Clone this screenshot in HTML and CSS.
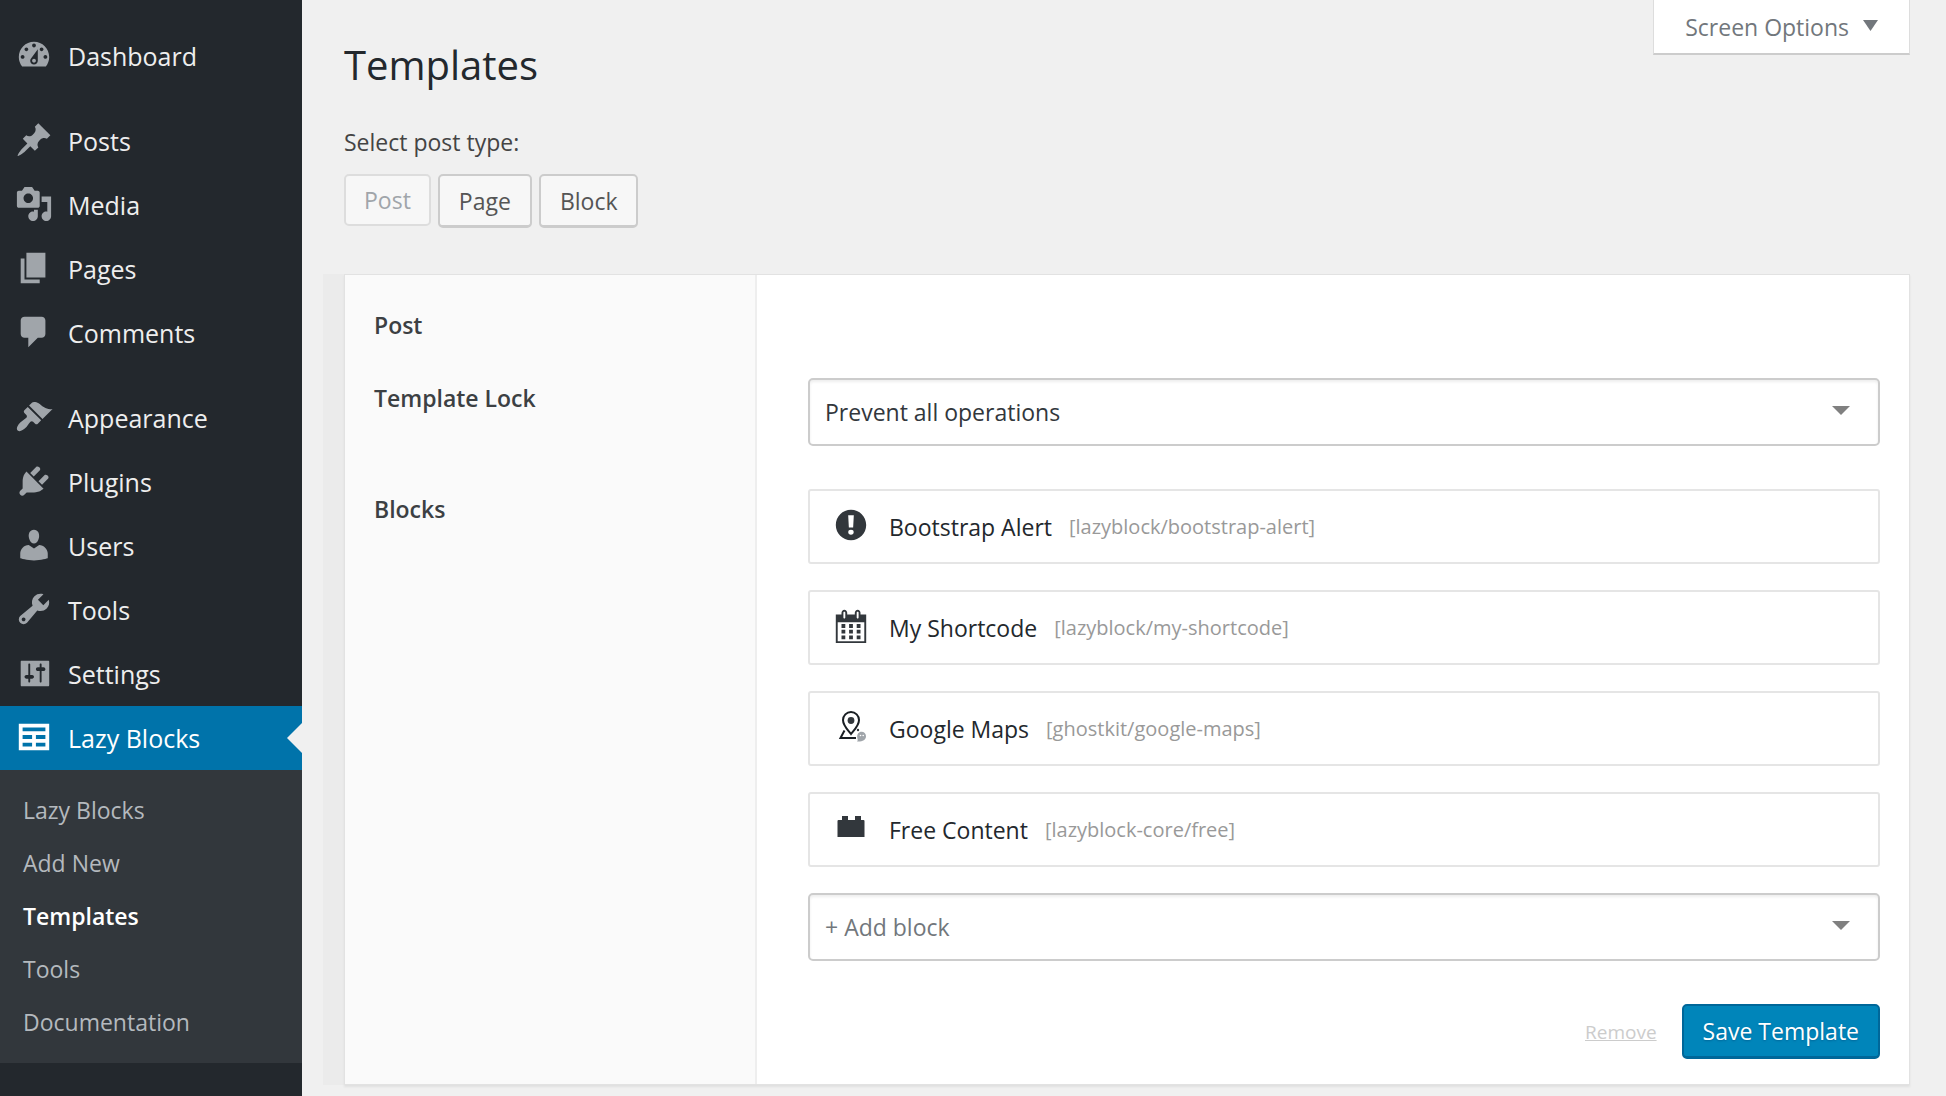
FILE: index.html
```html
<!DOCTYPE html>
<html lang="en">
<head>
<meta charset="utf-8">
<title>Templates</title>
<link rel="stylesheet" href="styles.css">
</head>
<body>
<div class="layout">
  <nav class="sidebar" aria-label="Main menu">
    <ul class="menu">
      <li><a class="menu-link" href="#"><svg class="icon" viewBox="0 0 20 20"><path d="M3.76 16h12.48c1.1-1.37 1.76-3.11 1.76-5 0-4.42-3.58-8-8-8s-8 3.58-8 8c0 1.89.66 3.63 1.76 5zM10 4c.55 0 1 .45 1 1s-.45 1-1 1-1-.45-1-1 .45-1 1-1zM6 6c.55 0 1 .45 1 1s-.45 1-1 1-1-.45-1-1 .45-1 1-1zm8 0c.55 0 1 .45 1 1s-.45 1-1 1-1-.45-1-1 .45-1 1-1zm-5.37 5.55L12 7v6c0 1.1-.9 2-2 2s-2-.9-2-2c0-.57.24-1.08.63-1.45zM4 10c.55 0 1 .45 1 1s-.45 1-1 1-1-.45-1-1 .45-1 1-1zm12 0c.55 0 1 .45 1 1s-.45 1-1 1-1-.45-1-1 .45-1 1-1zm-5 3c0-.55-.45-1-1-1s-1 .45-1 1 .45 1 1 1 1-.45 1-1z"/></svg>Dashboard</a></li>
      <li class="group-start"><a class="menu-link" href="#"><svg class="icon" viewBox="0 0 20 20"><path d="M10.44 3.02l1.82-1.82 6.36 6.35-1.83 1.82c-1.05-.68-2.48-.57-3.41.36l-.75.75c-.92.93-1.04 2.35-.35 3.41l-1.83 1.82-2.41-2.41-2.8 2.79c-.42.42-3.38 2.71-3.8 2.29s1.86-3.39 2.28-3.81l2.79-2.79L4.1 9.36l1.83-1.82c1.05.69 2.48.57 3.4-.36l.75-.75c.93-.92 1.05-2.35.36-3.41z"/></svg>Posts</a></li>
      <li><a class="menu-link" href="#"><svg class="icon" viewBox="0 0 20 20"><path d="M13 11V4c0-.55-.45-1-1-1h-1.67L9 1H5L3.67 3H2c-.55 0-1 .45-1 1v7c0 .55.45 1 1 1h10c.55 0 1-.45 1-1zM7 4.5c1.38 0 2.5 1.12 2.5 2.5S8.38 9.5 7 9.5 4.5 8.38 4.5 7 5.62 4.5 7 4.5zM14 6h5v10.5c0 1.38-1.12 2.5-2.5 2.5S14 17.88 14 16.5s1.12-2.5 2.5-2.5c.17 0 .34.02.5.05V9h-3V6zm-4 8.05V13h2v3.5c0 1.38-1.12 2.5-2.5 2.5S7 17.88 7 16.5 8.12 14 9.5 14c.17 0 .34.02.5.05z"/></svg>Media</a></li>
      <li><a class="menu-link" href="#"><svg class="icon" viewBox="0 0 20 20"><path d="M6 15V2h10v13H6zm-1 1h8v2H3V5h2v11z"/></svg>Pages</a></li>
      <li><a class="menu-link" href="#"><svg class="icon" viewBox="0 0 20 20"><path d="M5 2h9c1.1 0 2 .9 2 2v7c0 1.1-.9 2-2 2h-2l-5 5v-5H5c-1.1 0-2-.9-2-2V4c0-1.1.9-2 2-2z"/></svg>Comments</a></li>
      <li class="group-start"><a class="menu-link" href="#"><svg class="icon" viewBox="0 0 20 20"><path d="M14.48 11.06L7.41 3.99l1.5-1.5c.5-.56 2.3-.47 3.51.32 1.21.8 1.43 1.28 2.91 2.1 1.18.64 2.45 1.26 4.45.85zm-.71.71L6.7 4.7 4.93 6.47c-.39.39-.39 1.02 0 1.41l1.06 1.06c.39.39.39 1.03 0 1.42-.6.6-1.43 1.11-2.21 1.69-.35.26-.7.53-1.01.84C1.43 14.23.4 16.08 1.4 17.07c.99 1 2.84-.03 4.18-1.36.31-.31.58-.66.85-1.02.57-.78 1.08-1.61 1.69-2.21.39-.39 1.02-.39 1.41 0l1.06 1.06c.39.39 1.02.39 1.41 0z"/></svg>Appearance</a></li>
      <li><a class="menu-link" href="#"><svg class="icon" viewBox="0 0 20 20"><path d="M13.11 4.36L9.87 7.6 8 5.73l3.24-3.24c.35-.34 1.05-.2 1.56.32.52.51.66 1.21.31 1.55zm-8 1.77l.91-1.12 9.01 9.01-1.19.84c-.71.71-2.63 1.16-3.82 1.16H6.14L4.9 17.26c-.59.59-1.54.59-2.12 0-.59-.58-.59-1.53 0-2.12l1.24-1.24v-3.88c0-1.13.4-3.19 1.09-3.89zm7.26 3.97l3.24-3.24c.34-.35 1.04-.21 1.55.31.52.51.66 1.21.31 1.55l-3.24 3.25z"/></svg>Plugins</a></li>
      <li><a class="menu-link" href="#"><svg class="icon" viewBox="0 0 20 20"><path d="M10 9.25c-2.27 0-2.73-3.44-2.73-3.44C7 4.02 7.82 2 9.97 2c2.16 0 2.98 2.02 2.71 3.81 0 0-.41 3.44-2.68 3.44zm0 2.57L12.72 10c2.39 0 4.52 2.33 4.52 4.53v2.49s-3.65 1.13-7.24 1.13c-3.65 0-7.24-1.13-7.24-1.13v-2.49c0-2.25 1.94-4.48 4.47-4.48z"/></svg>Users</a></li>
      <li><a class="menu-link" href="#"><svg class="icon" viewBox="0 0 20 20"><path d="M16.68 9.77c-1.34 1.34-3.3 1.67-4.95.99l-5.41 6.52c-.99.99-2.59.99-3.58 0s-.99-2.59 0-3.57l6.52-5.42c-.68-1.65-.35-3.61.99-4.95 1.28-1.28 3.12-1.62 4.72-1.06l-2.89 2.89 2.82 2.82 2.86-2.87c.53 1.58.18 3.39-1.08 4.65zM3.81 16.21c.4.39 1.04.39 1.43 0 .4-.4.4-1.04 0-1.43-.39-.4-1.03-.4-1.43 0-.39.39-.39 1.03 0 1.43z"/></svg>Tools</a></li>
      <li><a class="menu-link" href="#"><svg class="icon" viewBox="0 0 20 20"><path d="M18 16.5V4c0-.28-.22-.5-.5-.5h-14c-.28 0-.5.22-.5.5v12.500c0 .28.22.5.5.5h14c.28 0 .5-.22.5-.5zM8 11h1c.55 0 1 .45 1 1s-.45 1-1 1H8v1.500c0 .28-.22.5-.5.5s-.5-.22-.5-.5V13H6c-.55 0-1-.45-1-1s.45-1 1-1h1V5.500c0-.28.22-.5.5-.5s.5.22.5.5V11zm5-2h-1c-.55 0-1-.45-1-1s.45-1 1-1h1V5.500c0-.28.22-.5.5-.5s.5.22.5.5V7h1c.55 0 1 .45 1 1s-.45 1-1 1h-1v5.500c0 .28-.22.5-.5.5s-.5-.22-.5-.5V9z"/></svg>Settings</a></li>
      <li>
        <a class="menu-link current" href="#"><svg class="icon" viewBox="0 0 20 20"><path d="M18 17V3H2v14h16zM16 7H4V5h12v2zm-7 4H4V9h5v2zm7 0h-5V9h5v2zm-7 4H4v-2h5v2zm7 0h-5v-2h5v2z"/></svg>Lazy Blocks</a>
        <ul class="submenu">
          <li><a href="#">Lazy Blocks</a></li>
          <li><a href="#">Add New</a></li>
          <li><a class="active" href="#" aria-current="page">Templates</a></li>
          <li><a href="#">Tools</a></li>
          <li><a href="#">Documentation</a></li>
        </ul>
      </li>
    </ul>
  </nav>

  <main class="main">
    <header class="page-head">
      <h1>Templates</h1>
      <button class="screen-options" type="button">Screen Options<svg class="caret" viewBox="0 0 15 11"><path d="M0 0h15L7.500 11z"/></svg></button>
    </header>

    <p class="prompt">Select post type:</p>
    <div class="types">
      <button class="button" type="button" disabled>Post</button>
      <button class="button" type="button">Page</button>
      <button class="button" type="button">Block</button>
    </div>

    <div class="panel-wrap">
      <form class="panel">
        <div class="labels">
          <h2 class="label">Post</h2>
          <label class="label label-lock" for="lock">Template Lock</label>
          <label class="label label-blocks" for="add-block">Blocks</label>
        </div>
        <div class="fields">
          <div class="select">
            <select id="lock"><option>Prevent all operations</option></select>
          </div>
          <ul class="blocks">
            <li class="block"><svg class="block-icon" viewBox="0 0 20 20"><path d="M10 2c4.420 0 8 3.580 8 8s-3.580 8-8 8-8-3.580-8-8 3.580-8 8-8zm1.130 9.380l.35-6.460H8.520l.35 6.460h2.260zm-.09 3.360c.24-.23.37-.55.37-.96 0-.42-.12-.74-.36-.97s-.59-.35-1.060-.35-.82.12-1.070.35-.37.55-.37.97c0 .41.13.73.38.96.26.23.61.34 1.060.34s.8-.11 1.050-.34z"/></svg><span class="block-name">Bootstrap Alert</span><span class="block-slug">[lazyblock/bootstrap-alert]</span></li>
            <li class="block"><svg class="block-icon" viewBox="0 0 20 20"><path d="M15 4h3v15H2V4h3V3c0-.41.15-.76.44-1.06.29-.29.65-.44 1.06-.44s.77.15 1.06.44c.29.3.44.65.44 1.06v1h4V3c0-.41.15-.76.44-1.06.29-.29.65-.44 1.06-.44s.77.15 1.06.44c.29.3.44.65.44 1.06v1zM6 3v2.500c0 .14.05.26.15.36.09.09.21.14.35.14s.26-.05.35-.14c.1-.1.15-.22.15-.36V3c0-.14-.05-.26-.15-.35-.09-.1-.21-.15-.35-.15s-.26.05-.35.15c-.1.09-.15.21-.15.35zm7 0v2.500c0 .14.05.26.14.36.1.09.22.14.36.14s.26-.05.36-.14c.09-.1.14-.22.14-.36V3c0-.14-.05-.26-.14-.35-.1-.1-.22-.15-.36-.15s-.26.05-.36.15c-.09.09-.14.21-.14.35zm4 15V8H3v10h14zM7 9v2H5V9h2zm2 0h2v2H9V9zm4 2V9h2v2h-2zm-6 1v2H5v-2h2zm2 0h2v2H9v-2zm4 2v-2h2v2h-2zm-6 1v2H5v-2h2zm4 2H9v-2h2v2zm4 0h-2v-2h2v2z"/></svg><span class="block-name">My Shortcode</span><span class="block-slug">[lazyblock/my-shortcode]</span></li>
            <li class="block"><svg class="block-icon" viewBox="0 0 38 38"><path class="line" d="M19 26c-3.500-4.500-8-8.500-8-14a8 8 0 0 1 16 0c0 5.500-4.500 9.500-8 14z"/><circle cx="19" cy="12.500" r="3.400"/><path class="line" d="M12.500 22.500L8.500 30H24"/><circle cx="26" cy="22" r="1.200"/><path class="ghost" d="M25 33.500c1.200-1 .6-2.200.3-3.500-.6-4 1.500-6.200 4.200-6.200 2.600 0 4.500 2 4.500 4.400 0 3.600-4 5.800-9 5.300z"/><circle class="eye" cx="28.500" cy="27.500" r=".8"/><circle class="eye" cx="31.200" cy="27.500" r=".8"/></svg><span class="block-name">Google Maps</span><span class="block-slug">[ghostkit/google-maps]</span></li>
            <li class="block"><svg class="block-icon" viewBox="0 0 38 38"><path d="M10 7h6v4h7V7h6v4h2.500q1 0 1 1v16h-27V12q0-1 1-1H10z"/></svg><span class="block-name">Free Content</span><span class="block-slug">[lazyblock-core/free]</span></li>
          </ul>
          <div class="select muted">
            <select id="add-block"><option>+ Add block</option></select>
          </div>
          <div class="actions">
            <a class="remove" href="#">Remove</a>
            <button class="button primary" type="button">Save Template</button>
          </div>
        </div>
      </form>
    </div>
  </main>
</div>
</body>
</html>
```
FILE: styles.css
```css
* {
  box-sizing: border-box;
}

body {
  margin: 0;
  background: #f0f0f0;
  color: #444;
  font: 23px/32px "Open Sans", "Noto Sans", sans-serif;
}

ul {
  margin: 0;
  padding: 0;
  list-style: none;
}

button,
select {
  font: inherit;
}

.layout {
  display: flex;
  min-height: 100vh;
}

/* Sidebar */

.sidebar {
  flex: 0 0 302px;
  padding-top: 24px;
  background: #23282d;
}

.group-start {
  margin-top: 21px;
}

.menu-link {
  display: flex;
  align-items: center;
  gap: 15px;
  height: 64px;
  padding-left: 15px;
  color: #eee;
  font-size: 25px;
  text-decoration: none;
}

.icon {
  width: 38px;
  height: 38px;
  margin-bottom: 3px;
  fill: #a0a5aa;
}

.current {
  position: relative;
  background: #0073aa;
  color: #fff;
}

.current .icon {
  fill: #fff;
}

.current::after {
  content: "";
  position: absolute;
  top: 17px;
  right: 0;
  border: 15px solid transparent;
  border-left-width: 0;
  border-right-color: #f0f0f0;
}

.submenu {
  padding: 14px 0;
  background: #32373c;
}

.submenu a {
  display: block;
  padding: 10px 23px 11px;
  color: #b4b9be;
  text-decoration: none;
}

.submenu .active {
  color: #fff;
  font-weight: 600;
}

/* Page */

.main {
  flex: 1;
  min-width: 0;
  padding: 0 36px 10px 21px;
}

.page-head {
  display: flex;
  align-items: flex-start;
  justify-content: space-between;
  padding-left: 21px;
}

h1 {
  margin: 35px 0 0;
  color: #23282d;
  font-size: 40px;
  font-weight: 400;
  line-height: 60px;
}

.screen-options {
  display: flex;
  align-items: center;
  gap: 14px;
  height: 55px;
  padding: 0 31px;
  border: 1px solid #ddd;
  border-top: 0;
  border-bottom: 2px solid #ccc;
  background: #fff;
  color: #72777c;
}

.caret {
  width: 15px;
  height: 11px;
  margin-bottom: 3px;
  fill: #72777c;
}

.prompt {
  margin: 31px 0 16px 21px;
}

.types {
  display: flex;
  gap: 7px;
  margin: 0 0 46px 21px;
}

.button {
  height: 54px;
  padding: 0 19px;
  border: 2px solid #ccc;
  border-bottom-width: 3px;
  border-radius: 5px;
  background: #f7f7f7;
  color: #555;
}

.button:disabled {
  height: 52px;
  padding: 0 18px;
  border-color: #ddd;
  border-bottom-width: 2px;
  color: #a0a5aa;
}

.primary {
  height: 55px;
  border-color: #006799;
  background: #0085ba;
  color: #fff;
  text-shadow: 0 1px 2px #006799;
}

/* Template panel */

.panel-wrap {
  padding-left: 21px;
  background: #ebebeb;
}

.panel {
  display: grid;
  grid-template-columns: 412px 1fr;
  border: 1px solid #e2e2e2;
  background: #fff;
  box-shadow: 0 2px 2px #e0e0e0;
}

.labels {
  display: flex;
  flex-direction: column;
  padding: 34px 29px;
  border-right: 2px solid #eee;
  background: #fafafa;
}

.label {
  margin: 0;
  color: #3c4043;
  font-size: 23px;
  font-weight: 600;
}

.label-lock {
  margin-top: 41px;
}

.label-blocks {
  margin-top: 79px;
}

.fields {
  padding: 103px 29px 25px 51px;
}

.select {
  position: relative;
}

.select::after {
  content: "";
  position: absolute;
  top: 28px;
  right: 30px;
  border: 9px solid transparent;
  border-top-color: #808080;
  border-bottom-width: 0;
}

.select select {
  appearance: none;
  display: block;
  width: 100%;
  height: 68px;
  padding: 0 15px;
  border: 2px solid #ccc;
  border-radius: 5px;
  background: #fff;
  box-shadow: inset 0 2px 3px #eee;
  color: #32373c;
}

.muted select {
  color: #72777c;
}

.blocks {
  display: grid;
  gap: 26px;
  margin: 43px 0 26px;
}

.block {
  display: flex;
  align-items: center;
  height: 75px;
  padding: 0 22px;
  border: 2px solid #e5e5e5;
  border-radius: 3px;
}

.block-icon {
  width: 38px;
  height: 38px;
  margin: 0 19px 3px 0;
  fill: #32373c;
}

.line {
  fill: none;
  stroke: #191e23;
  stroke-width: 2;
}

.ghost {
  fill: #a0a5aa;
}

.eye {
  fill: #fff;
}

.block-name {
  margin-right: 17px;
  color: #23282d;
}

.block-slug {
  color: #999;
  font-size: 20px;
}

.actions {
  display: flex;
  align-items: center;
  justify-content: flex-end;
  gap: 25px;
  margin-top: 43px;
}

.remove {
  color: #ccc;
  font-size: 19px;
}
```
